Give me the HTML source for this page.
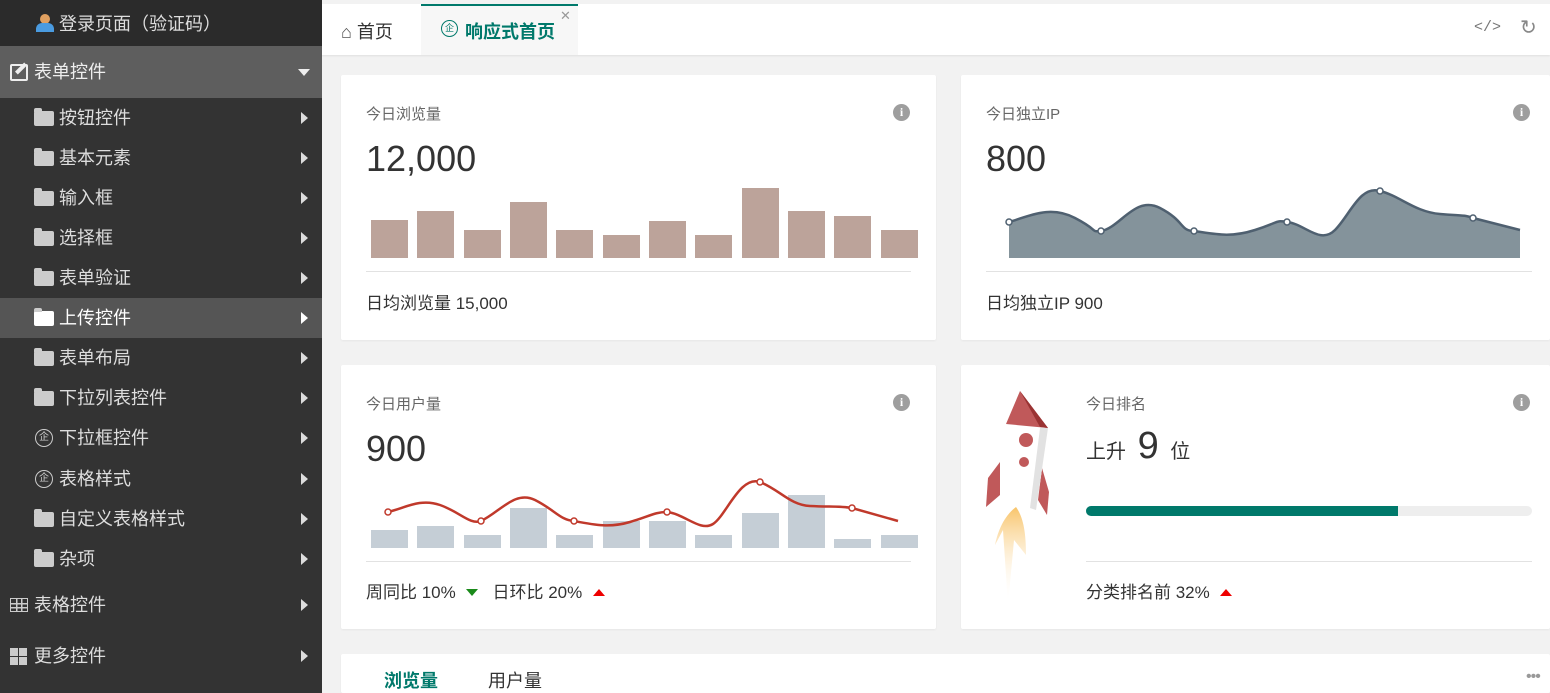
<!DOCTYPE html>
<html><head><meta charset="utf-8"><style>
*{margin:0;padding:0;box-sizing:border-box}
html,body{width:1550px;height:693px;overflow:hidden}
body{background:#f2f2f2;font-family:"Liberation Sans","Noto Sans CJK SC",sans-serif;position:relative;color:#333}
.sb{position:absolute;left:0;top:0;width:322px;height:693px;background:#333}
.it{position:absolute;left:0;width:322px;height:40px;color:#ddd;font-size:18px;line-height:40px;padding-left:59px}
.ar{position:absolute;right:14px;top:14px;width:0;height:0;border-left:7px solid #ddd;border-top:6px solid transparent;border-bottom:6px solid transparent}
.fold{position:absolute;left:34px;top:13px;width:20px;height:15px;background:#ccc;border-radius:2px}
.fold:before{content:"";position:absolute;left:0;top:-3px;width:8px;height:4px;background:#ccc;border-radius:2px 2px 0 0}
.qi{position:absolute;left:35px;top:11px;width:18px;height:18px;border:1.5px solid #ccc;border-radius:50%;font-size:10px;line-height:15px;text-align:center;color:#ccc;padding:0}
.card{position:absolute;background:#fff;border-radius:2px;box-shadow:0 1px 2px rgba(0,0,0,.05)}
.t{position:absolute;font-size:15px;color:#666}
.big{position:absolute;font-size:36px;color:#333}
.info{position:absolute;width:17px;height:17px;border-radius:50%;background:#9e9e9e;color:#fff;font-size:12px;font-weight:bold;text-align:center;line-height:17px;font-family:"Liberation Serif",serif}
.hr{position:absolute;height:1px;background:#e2e2e2}
.ft{position:absolute;font-size:17px;color:#333}
</style></head><body>
<div class="sb">
<div style="position:absolute;left:0;top:0;width:322px;height:46px;background:#2b2b2b"></div>
<div class="it" style="top:4px;font-size:18px">
<span style="position:absolute;left:36px;top:10px;width:18px;height:18px"><span style="position:absolute;left:4px;top:0;width:10px;height:10px;border-radius:50%;background:#e0a060"></span><span style="position:absolute;left:0;top:9px;width:18px;height:9px;border-radius:6px 6px 0 0;background:#4a9be0"></span></span>登录页面（验证码）</div>
<div style="position:absolute;left:0;top:46px;width:322px;height:52px;background:#5e5e5e"></div>
<div class="it" style="top:52px;padding-left:34px;color:#eee">
<span style="position:absolute;left:10px;top:12px;width:18px;height:17px;border:2px solid #eee;border-radius:2px"></span><span style="position:absolute;left:19px;top:10px;width:4px;height:13px;background:#eee;transform:rotate(45deg)"></span>表单控件
<span style="position:absolute;right:12px;top:17px;border-top:7px solid #eee;border-left:6px solid transparent;border-right:6px solid transparent"></span></div>
<div class="it" style="top:98px"><span class="fold"></span>按钮控件<span class="ar"></span></div>
<div class="it" style="top:138px"><span class="fold"></span>基本元素<span class="ar"></span></div>
<div class="it" style="top:178px"><span class="fold"></span>输入框<span class="ar"></span></div>
<div class="it" style="top:218px"><span class="fold"></span>选择框<span class="ar"></span></div>
<div class="it" style="top:258px"><span class="fold"></span>表单验证<span class="ar"></span></div>
<div class="it" style="top:298px;background:#555;color:#fff"><span class="fold" style="background:#fff"></span>上传控件<span class="ar" style="border-left-color:#fff"></span></div>
<div class="it" style="top:338px"><span class="fold"></span>表单布局<span class="ar"></span></div>
<div class="it" style="top:378px"><span class="fold"></span>下拉列表控件<span class="ar"></span></div>
<div class="it" style="top:418px"><span class="qi">企</span>下拉框控件<span class="ar"></span></div>
<div class="it" style="top:459px"><span class="qi">企</span>表格样式<span class="ar"></span></div>
<div class="it" style="top:499px"><span class="fold"></span>自定义表格样式<span class="ar"></span></div>
<div class="it" style="top:539px"><span class="fold"></span>杂项<span class="ar"></span></div>
<div class="it" style="top:585px;padding-left:34px"><span style="position:absolute;left:10px;top:13px;width:18px;height:14px;border:1.5px solid #ccc;background:linear-gradient(#ccc,#ccc) 0 4px/100% 1.5px no-repeat,linear-gradient(#ccc,#ccc) 0 8px/100% 1.5px no-repeat,linear-gradient(90deg,#ccc,#ccc) 5px 0/1.5px 100% no-repeat,linear-gradient(90deg,#ccc,#ccc) 10px 0/1.5px 100% no-repeat"></span>表格控件<span class="ar"></span></div>
<div class="it" style="top:636px;padding-left:34px"><span style="position:absolute;left:10px;top:12px;width:8px;height:8px;background:#ccc;box-shadow:9px 0 #ccc,0 9px #ccc,9px 9px #ccc"></span>更多控件<span class="ar"></span></div>
</div>
<!-- tab bar -->
<div style="position:absolute;left:322px;top:0;width:1228px;height:55px;background:#fff;border-top:4px solid #f2f2f2;box-shadow:0 1px 2px rgba(0,0,0,.08)"></div>
<div style="position:absolute;left:341px;top:18px;font-size:18px;color:#333"><span style="color:#555">&#8962;</span> 首页</div>
<div style="position:absolute;left:421px;top:4px;width:157px;height:51px;background:#f7f7f7;border-top:2px solid #00796b"></div>
<div style="position:absolute;left:441px;top:20px;width:17px;height:17px;border:1.5px solid #00796b;border-radius:50%;font-size:9px;text-align:center;line-height:14px;color:#00796b">企</div>
<div style="position:absolute;left:465px;top:18px;font-size:18px;font-weight:bold;color:#00796b">响应式首页</div>
<div style="position:absolute;left:560px;top:8px;font-size:13px;color:#999">✕</div>
<div style="position:absolute;left:1474px;top:19px;font-size:15px;color:#777;font-family:'Liberation Mono',monospace">&lt;/&gt;</div>
<div style="position:absolute;left:1520px;top:15px;font-size:20px;color:#888">↻</div>
<!-- card1 -->
<div class="card" style="left:341px;top:75px;width:595px;height:265px"></div>
<div class="t" style="left:366px;top:103px">今日浏览量</div><div class="info" style="left:893px;top:104px">i</div>
<div class="big" style="left:366px;top:138px">12,000</div>
<div class="card" style="left:961px;top:75px;width:589px;height:265px"></div>
<div class="card" style="left:341px;top:365px;width:595px;height:264px"></div>
<div class="card" style="left:961px;top:365px;width:589px;height:264px"></div>
<svg style="position:absolute;left:0;top:0" width="1550" height="693">
<g fill="#bca39a">
<rect x="371" y="220" width="37" height="38"/><rect x="417" y="211" width="37" height="47"/><rect x="464" y="230" width="37" height="28"/><rect x="510" y="202" width="37" height="56"/><rect x="556" y="230" width="37" height="28"/><rect x="603" y="235" width="37" height="23"/><rect x="649" y="221" width="37" height="37"/><rect x="695" y="235" width="37" height="23"/><rect x="742" y="188" width="37" height="70"/><rect x="788" y="211" width="37" height="47"/><rect x="834" y="216" width="37" height="42"/><rect x="881" y="230" width="37" height="28"/></g>
<path d="M1009 222 C1030 216,1050 205,1075 218 S1090 232,1101 231 C1120 228,1135 195,1160 208 S1180 231,1194 231 C1215 234,1230 238,1255 230 S1275 220,1287 222 C1305 224,1320 245,1335 230 S1360 185,1380 191 C1400 196,1415 212,1440 214 S1465 215,1473 218 L1520 230 L1520 258 L1009 258Z" fill="#84939b"/>
<path d="M1009 222 C1030 216,1050 205,1075 218 S1090 232,1101 231 C1120 228,1135 195,1160 208 S1180 231,1194 231 C1215 234,1230 238,1255 230 S1275 220,1287 222 C1305 224,1320 245,1335 230 S1360 185,1380 191 C1400 196,1415 212,1440 214 S1465 215,1473 218 L1520 230" fill="none" stroke="#4f6070" stroke-width="2.5"/>
<g fill="#fff" stroke="#4f6070" stroke-width="1.5"><circle cx="1009" cy="222" r="3"/><circle cx="1101" cy="231" r="3"/><circle cx="1194" cy="231" r="3"/><circle cx="1287" cy="222" r="3"/><circle cx="1380" cy="191" r="3"/><circle cx="1473" cy="218" r="3"/></g>
<g fill="#c5ced6">
<rect x="371" y="530" width="37" height="18"/><rect x="417" y="526" width="37" height="22"/><rect x="464" y="535" width="37" height="13"/><rect x="510" y="508" width="37" height="40"/><rect x="556" y="535" width="37" height="13"/><rect x="603" y="521" width="37" height="27"/><rect x="649" y="521" width="37" height="27"/><rect x="695" y="535" width="37" height="13"/><rect x="742" y="513" width="37" height="35"/><rect x="788" y="495" width="37" height="53"/><rect x="834" y="539" width="37" height="9"/><rect x="881" y="535" width="37" height="13"/></g>
<path d="M388 512 C405 508,420 498,440 505 S470 525,481 521 C500 512,515 490,535 500 S560 520,574 521 C595 525,610 528,630 522 S655 512,667 512 C685 514,700 532,713 524 S740 475,760 482 C780 490,790 505,810 506 S840 506,852 508 L898 521" fill="none" stroke="#c0392b" stroke-width="2.5"/>
<g fill="#fff" stroke="#c0392b" stroke-width="1.5"><circle cx="388" cy="512" r="3"/><circle cx="481" cy="521" r="3"/><circle cx="574" cy="521" r="3"/><circle cx="667" cy="512" r="3"/><circle cx="760" cy="482" r="3"/><circle cx="852" cy="508" r="3"/></g>
<defs><linearGradient id="f" x1="0" y1="0" x2="0" y2="1"><stop offset="0" stop-color="#f8c46a"/><stop offset="1" stop-color="#fff" stop-opacity="0"/></linearGradient></defs>
<path d="M1016 507 C1005 515,998 530,995 545 L1003 530 L1008 605 L1014 540 L1026 555 C1026 535,1024 518,1016 507Z" fill="url(#f)"/>
<path d="M1000 462 L988 478 L986 507 L1000 495Z" fill="#c0595a"/>
<path d="M1042 468 L1049 492 L1047 515 L1038 500Z" fill="#c0595a"/>
<path d="M1005 425 L1048 428 L1036 510 L1000 500Z" fill="#fff"/>
<path d="M1040 428 L1048 428 L1036 510 L1030 508Z" fill="#e2e2e2"/>
<path d="M1006 424 L1020 391 L1048 428Z" fill="#c0595a"/>
<path d="M1020 391 L1048 428 L1040 427Z" fill="#9a3333"/>
<circle cx="1026" cy="440" r="7" fill="#c0595a"/><circle cx="1024" cy="462" r="5" fill="#c0595a"/>
</svg>
<div class="hr" style="left:366px;top:271px;width:545px"></div>
<div class="ft" style="left:366px;top:289px">日均浏览量 15,000</div>
<!-- card2 -->
<div class="t" style="left:986px;top:103px">今日独立IP</div><div class="info" style="left:1513px;top:104px">i</div>
<div class="big" style="left:986px;top:138px">800</div>
<div class="hr" style="left:986px;top:271px;width:546px"></div>
<div class="ft" style="left:986px;top:289px">日均独立IP 900</div>
<!-- card3 -->
<div class="t" style="left:366px;top:393px">今日用户量</div><div class="info" style="left:893px;top:394px">i</div>
<div class="big" style="left:366px;top:428px">900</div>
<div class="hr" style="left:366px;top:561px;width:545px"></div>
<div class="ft" style="left:366px;top:578px">周同比 10% <span style="display:inline-block;border-top:7px solid #1a8a1a;border-left:6px solid transparent;border-right:6px solid transparent;margin:0 14px 2px 6px"></span>日环比 20% <span style="display:inline-block;border-bottom:7px solid #e00;border-left:6px solid transparent;border-right:6px solid transparent;margin:0 0 2px 6px"></span></div>
<!-- card4 -->
<div class="t" style="left:1086px;top:393px">今日排名</div><div class="info" style="left:1513px;top:394px">i</div>
<div style="position:absolute;left:1086px;top:425px;font-size:20px;color:#333">上升 <span style="font-size:38px;margin:0 6px">9</span> 位</div>
<div style="position:absolute;left:1086px;top:506px;width:446px;height:10px;border-radius:5px;background:#eee"><div style="width:312px;height:10px;border-radius:5px 0 0 5px;background:#00796b"></div></div>
<div class="hr" style="left:1086px;top:561px;width:446px"></div>
<div class="ft" style="left:1086px;top:578px">分类排名前 32% <span style="display:inline-block;border-bottom:7px solid #e00;border-left:6px solid transparent;border-right:6px solid transparent;margin:0 0 2px 6px"></span></div>
<!-- bottom card -->
<div class="card" style="left:341px;top:654px;width:1209px;height:39px"></div>
<div style="position:absolute;left:384px;top:667px;font-size:18px;font-weight:bold;color:#00796b">浏览量</div>
<div style="position:absolute;left:488px;top:667px;font-size:18px;color:#333">用户量</div>
<div style="position:absolute;left:1526px;top:668px;font-size:16px;color:#999;letter-spacing:-1px">•••</div>
</body></html>
